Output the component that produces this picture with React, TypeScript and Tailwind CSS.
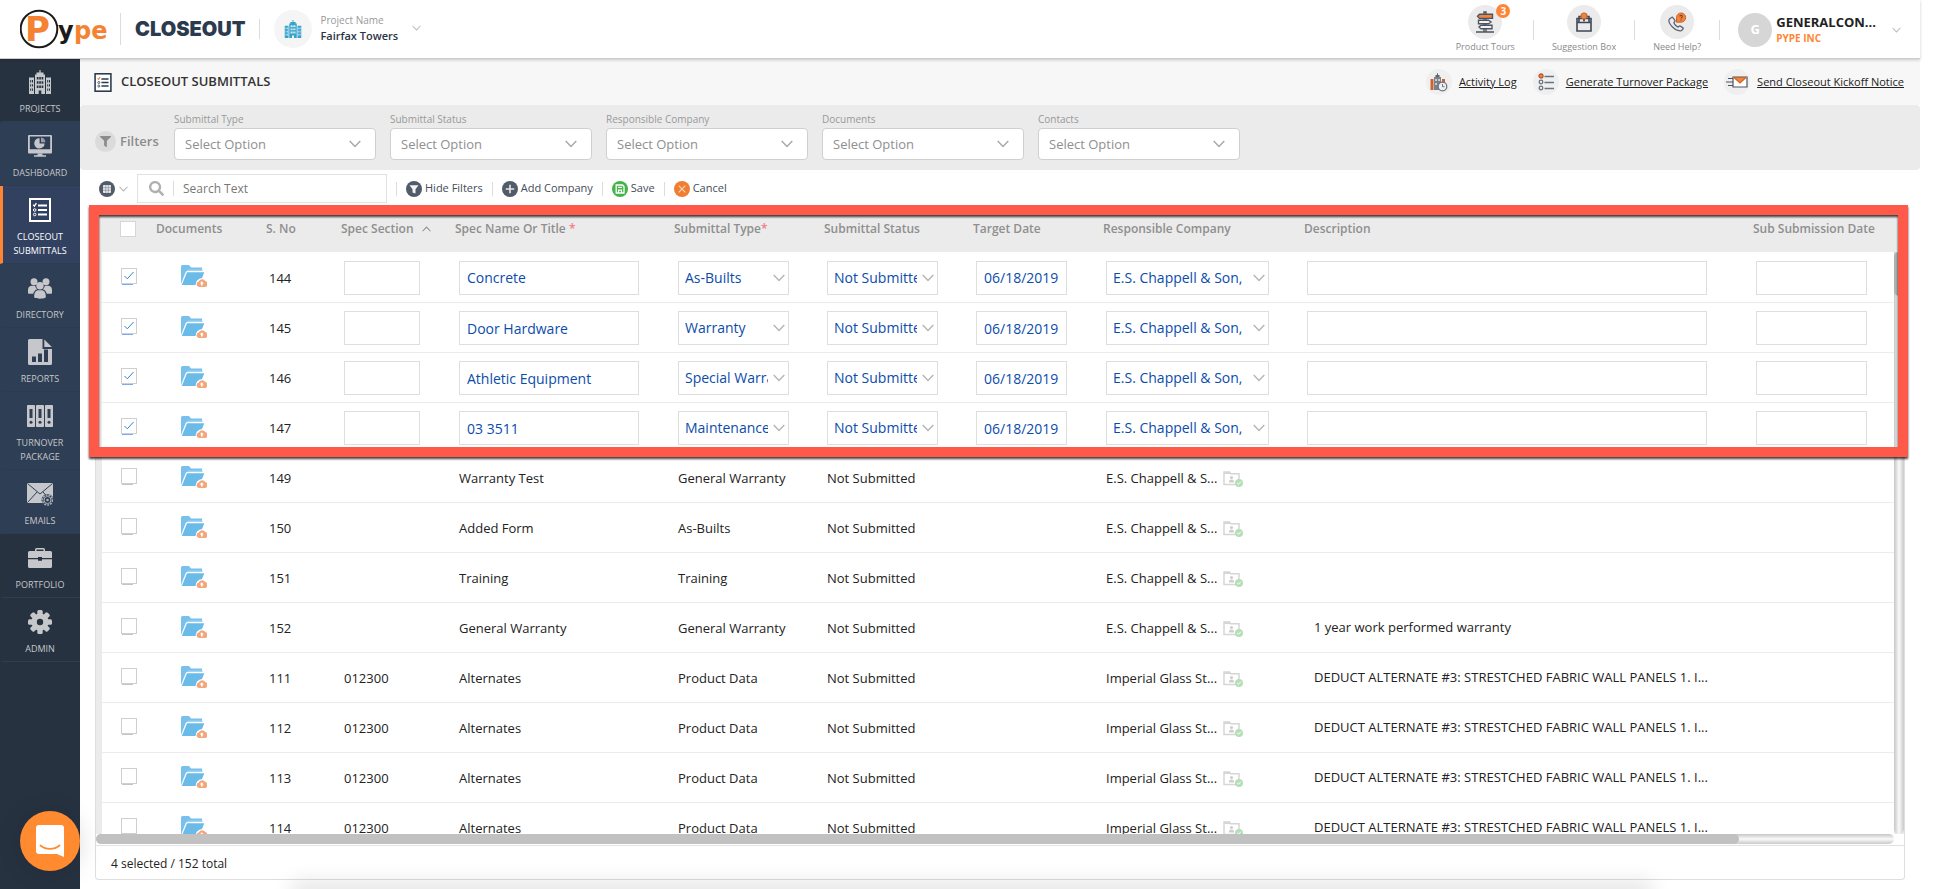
import { useState, type ReactNode } from "react";
import clsx from "clsx";
import { FaFilter, FaSearch } from "react-icons/fa";

type Submittal = {
  no: number;
  section?: string;
  name: string;
  type: string;
  company: string;
  description?: string;
  editing?: boolean;
};

const wallPanels = "DEDUCT ALTERNATE #3: STRESTCHED FABRIC WALL PANELS 1. I...";

const submittals: Submittal[] = [
  { no: 144, name: "Concrete", type: "As-Builts", company: "E.S. Chappell & Son,", editing: true },
  { no: 145, name: "Door Hardware", type: "Warranty", company: "E.S. Chappell & Son,", editing: true },
  { no: 146, name: "Athletic Equipment", type: "Special Warranty", company: "E.S. Chappell & Son,", editing: true },
  { no: 147, name: "03 3511", type: "Maintenance", company: "E.S. Chappell & Son,", editing: true },
  { no: 149, name: "Warranty Test", type: "General Warranty", company: "E.S. Chappell & S..." },
  { no: 150, name: "Added Form", type: "As-Builts", company: "E.S. Chappell & S..." },
  { no: 151, name: "Training", type: "Training", company: "E.S. Chappell & S..." },
  { no: 152, name: "General Warranty", type: "General Warranty", company: "E.S. Chappell & S...", description: "1 year work performed warranty" },
  { no: 111, section: "012300", name: "Alternates", type: "Product Data", company: "Imperial Glass St...", description: wallPanels },
  { no: 112, section: "012300", name: "Alternates", type: "Product Data", company: "Imperial Glass St...", description: wallPanels },
  { no: 113, section: "012300", name: "Alternates", type: "Product Data", company: "Imperial Glass St...", description: wallPanels },
  { no: 114, section: "012300", name: "Alternates", type: "Product Data", company: "Imperial Glass St...", description: wallPanels },
];

/* ---------- icons ---------- */

const Chevron = ({ className, up }: { className?: string; up?: boolean }) => (
  <svg viewBox="0 0 12 8" className={className} fill="none" stroke="currentColor" strokeWidth="1.4" aria-hidden="true">
    <path d={up ? "M.7 7 6 1.500 11.300 7" : "M.7 1 6 6.500 11.300 1"} />
  </svg>
);

const BuildingIcon = ({ className, hole }: { className?: string; hole: string }) => (
  <svg viewBox="0 0 24 24" className={className} fill="currentColor" aria-hidden="true">
    <path d="M11.4 0h1.2v2.5h2.9v2H17V24h-3.7v-3.5h-2.6V24H7V4.5h1.5v-2h2.9zM1 7.5h5V24H1zM18 7.5h5V24h-5z" />
    <g fill={hole}>
      <path d="M8.8 7h1.7v2.5H8.8zM11.2 7h1.7v2.5h-1.7zM13.6 7h1.7v2.5h-1.7zM8.8 11.2h1.7v2.5H8.8zM11.2 11.2h1.7v2.5h-1.7zM13.6 11.2h1.7v2.5h-1.7zM8.8 15.4h1.7v2.5H8.8zM11.2 15.4h1.7v2.5h-1.7zM13.6 15.4h1.7v2.5h-1.7z" />
      <path d="M2.2 10h1v2.4h-1zM4 10h1v2.4H4zM2.2 14.2h1v2.4h-1zM4 14.2h1v2.4H4zM2.2 18.4h1v2.4h-1zM4 18.4h1v2.4H4zM19.2 10h1v2.4h-1zM21 10h1v2.4h-1zM19.2 14.2h1v2.4h-1zM21 14.2h1v2.4h-1zM19.2 18.4h1v2.4h-1zM21 18.4h1v2.4h-1z" />
    </g>
  </svg>
);

const DashboardIcon = () => (
  <svg viewBox="0 0 24 24" className="size-6" fill="currentColor" aria-hidden="true">
    <path fillRule="evenodd" d="M1 1h22a1 1 0 0 1 1 1v16.5a1 1 0 0 1-1 1H1a1 1 0 0 1-1-1V2a1 1 0 0 1 1-1zm.8 1.6v12.6h20.4V2.6z" />
    <path d="M11.6 4.2v5.2h5a5.2 5.2 0 1 1-5-5.2z" />
    <path d="M13 3.6a5 5 0 0 1 4.4 4.6H13z" opacity=".7" />
    <path d="M9.5 19.5h5v1.8h-5zM6 21.2h12v1.6H6z" />
  </svg>
);

const ListIcon = ({ className, accent }: { className?: string; accent: string }) => (
  <svg viewBox="0 0 22 24" className={className} fill="none" stroke="currentColor" aria-hidden="true">
    <rect x="1" y="1" width="20" height="22" strokeWidth="2" />
    <path d="M9 7.500h9M9 12h9M9 16.500h9" strokeWidth="2" />
    <path d="M4.200 6.800l1.200 1.300 2-3" stroke={accent} strokeWidth="1.400" />
    <circle cx="5.700" cy="12" r="1.300" strokeWidth="1" />
    <circle cx="5.700" cy="16.500" r="1.300" strokeWidth="1" />
  </svg>
);

const PeopleIcon = () => (
  <svg viewBox="0 0 24 21" className="h-[21px] w-6" fill="currentColor" aria-hidden="true">
    <circle cx="6" cy="3.700" r="3.500" />
    <circle cx="18" cy="3.700" r="3.500" />
    <path d="M0 15.500V12c0-2.800 1.800-4.200 4-4.200h3.200c.3 1.700 1 2.700 1.900 3.400-2.300 1-3.400 2.500-3.900 4.600-2.200.1-3.900.1-5.200-.3zM24 15.500V12c0-2.800-1.800-4.200-4-4.200h-3.200c-.3 1.700-1 2.700-1.900 3.400 2.300 1 3.400 2.500 3.900 4.600 2.200.1 3.900.1 5.200-.3z" />
    <circle cx="12" cy="7.800" r="3.700" />
    <path d="M6.200 19.500c-.2-4.500 1.300-7.200 4.300-7.200h3c3 0 4.500 2.700 4.300 7.200-3 1.600-8.600 1.600-11.600 0z" />
  </svg>
);

const ReportIcon = () => (
  <svg viewBox="0 0 24 26" className="h-[26px] w-6" fill="currentColor" aria-hidden="true">
    <path fillRule="evenodd" d="M1.5 0h13v10H24v14.5a1.5 1.5 0 0 1-1.5 1.5h-21A1.5 1.5 0 0 1 0 24.500v-23A1.500 1.500 0 0 1 1.500 0zM4 17.500v5.500h4v-5.500zm6-3v8.500h4v-8.500zm6-4v12.500h4v-12.500z" />
    <path d="M16.300 .5 23.800 8h-7.500z" />
  </svg>
);

const BindersIcon = () => (
  <svg viewBox="0 0 26 22" className="h-[22px] w-[26px]" fill="currentColor" aria-hidden="true">
    {[0, 9, 18].map((x) => (
      <g key={x}>
        <rect x={x} width="8" height="22" rx=".8" />
        <rect x={x + 2.5} y="4" width="3" height="9" fill="#2e3e54" />
        <circle cx={x + 4} cy="17.300" r="1.500" fill="#2e3e54" />
      </g>
    ))}
  </svg>
);

const EmailsIcon = () => (
  <svg viewBox="0 0 26 24" className="h-6 w-[26px]" aria-hidden="true">
    <rect y="1" width="26" height="20" rx="1" fill="#c6c7ca" />
    <path d="M.5 1.500 13 12 25.500 1.500M.5 20.500 10 10M25.500 20.500 16 10" fill="none" stroke="#2e3e54" strokeWidth="1" />
    <circle cx="20.500" cy="18" r="6" fill="#2e3e54" />
    <circle cx="20.500" cy="18" r="5" fill="none" stroke="#a9adb5" strokeWidth="1.600" strokeDasharray="2 1" />
    <circle cx="20.500" cy="18" r="3.500" fill="none" stroke="#a9adb5" strokeWidth="1" />
    <circle cx="20.500" cy="18" r="1.300" fill="#a9adb5" />
  </svg>
);

const BriefcaseIcon = () => (
  <svg viewBox="0 0 24 20" className="h-5 w-6" fill="currentColor" aria-hidden="true">
    <path d="M7 3V1.500A1.500 1.500 0 0 1 8.500 0h7A1.500 1.500 0 0 1 17 1.500V3h5.500A1.500 1.500 0 0 1 24 4.500V10H14V9h-4v1H0V4.500A1.500 1.500 0 0 1 1.500 3zm1.500 0h7V1.500h-7z" />
    <path d="M0 11.200h10v1.500h4v-1.500h10v7.300a1.500 1.500 0 0 1-1.500 1.500h-21A1.500 1.500 0 0 1 0 18.500z" />
  </svg>
);

const GearIcon = () => (
  <svg viewBox="0 0 24 24" className="size-6" fill="currentColor" aria-hidden="true">
    {[0, 45, 90, 135].map((angle) => (
      <rect key={angle} x="9.300" y="0" width="5.400" height="24" rx="1.500" transform={`rotate(${angle} 12 12)`} />
    ))}
    <circle cx="12" cy="12" r="8.600" />
    <circle cx="12" cy="12" r="3.200" fill="#273241" />
  </svg>
);

const FolderUploadIcon = () => (
  <svg viewBox="0 0 26 23" className="h-[23px] w-[26px]" aria-hidden="true">
    <path d="M0 1.500A1.500 1.500 0 0 1 1.500 0H8l2 2.500h11V6H6.500a2 2 0 0 0-1.900 1.300L0 19z" fill="#79c1ec" />
    <path d="M6.500 5.200H22" stroke="#b5dcf4" strokeWidth="1" />
    <path d="M6 7.200h17.300L21 13a7 7 0 0 0-6.500 7H.8z" fill="#6bbbe9" />
    <path d="M18 22a2.800 2.800 0 0 1-.3-5.500 3.700 3.700 0 0 1 6.600-.4A3 3 0 0 1 23.800 22z" fill="#f2a67c" />
    <path d="M20.800 16.200l2 2.400h-1.200v1.900H20v-1.900h-1.200z" fill="#fff" />
  </svg>
);

const CompanyFolderIcon = () => (
  <svg viewBox="0 0 20 16" className="h-4 w-5" aria-hidden="true">
    <path d="M1 13.500V1h5.500l1.200 1.800H16v10.700z" fill="#fff" stroke="#d6d6d6" strokeWidth="1.500" />
    <path d="M1 1h5.500l1 2H1z" fill="#d6d6d6" />
    <circle cx="8.500" cy="6.500" r="1.600" fill="#cfcfcf" />
    <path d="M5.800 11.500c0-2 1-3 2.700-3s2.700 1 2.700 3z" fill="#cfcfcf" />
    <circle cx="16" cy="12" r="4" fill="#b4dfb7" />
    <path d="M14.200 12l1.300 1.300 2.300-2.500" fill="none" stroke="#fff" strokeWidth="1" />
  </svg>
);

const SignpostIcon = () => (
  <svg viewBox="0 0 20 22" className="h-[22px] w-5" fill="none" stroke="#4d5563" strokeWidth="1.400" aria-hidden="true">
    <path d="M9 1h2v20H9zM1 21h18" fill="#f0f0f0" />
    <path d="M4.500 3.200h13v4.200h-13L2.500 5.300z" fill="#f4823a" />
    <path d="M3.500 9.200h10l2.500 1.800-2.500 1.800h-10z" fill="#f0f0f0" />
    <path d="M6 14.200h11v3.600H6L4 16z" fill="#f0f0f0" />
  </svg>
);

const SuggestionIcon = () => (
  <svg viewBox="0 0 18 20" className="h-5 w-[18px]" fill="none" stroke="#3f4856" strokeWidth="1.600" aria-hidden="true">
    <path d="M4 10V4.500h10V10M2 6.500h14v12.500H2zM2 10.500h14" />
    <circle cx="9" cy="4" r="3" fill="#f4823a" stroke="#c8682c" strokeWidth="1.200" />
    <path d="M9 7v2.500" />
  </svg>
);

const HelpIcon = () => (
  <svg viewBox="0 0 20 20" className="size-5" fill="none" stroke="#5d6470" strokeWidth="1.300" aria-hidden="true">
    <path d="M4.500 5.500 2.500 7c-1 1.500-.5 4.500 3 8s7.500 4.500 9 3.500l1.500-1.500c.4-.6.200-1-.3-1.400l-2.400-1.500c-.5-.3-1-.2-1.300.200l-.8.800c-1.700-.5-4-3-4.300-4.500l.8-1c.4-.4.400-.8.200-1.200L5.900 5.700c-.3-.5-.9-.600-1.400-.200z" />
    <path d="M9.500 10.200V5.500a4.600 4.600 0 1 1 4.600 4.700z" fill="#f4823a" stroke="#c8682c" strokeWidth="1" />
    <path d="M12.700 4.400c.2-1.600 3-1.300 2.600.3-.2.600-1.200.8-1.200 1.800M14.100 7.600v1" stroke="#7a4420" strokeWidth="1.100" />
  </svg>
);

const ActivityIcon = () => (
  <svg viewBox="0 0 18 19" className="h-[19px] w-[18px]" aria-hidden="true">
    <path d="M.5 6h3v11h-3zM12 6h3v5h-3z" fill="#c9662f" />
    <path d="M4 4h7v13H4z" fill="#7b818c" />
    <path d="M5.500 2h4v2h-4zM7 .3h1V2H7z" fill="#5d6470" />
    <path d="M5.300 6h1.500v2H5.300zM8.300 6h1.500v2H8.300zM5.300 10h1.500v2H5.300z" fill="#e4e4e4" />
    <circle cx="12.500" cy="13.500" r="4.300" fill="#f0f0f0" stroke="#6b7280" strokeWidth="1.200" />
    <path d="M12.500 11v2.700h2" fill="none" stroke="#6b7280" />
  </svg>
);

const ChecklistIcon = () => (
  <svg viewBox="0 0 16 18" className="h-[18px] w-4" fill="none" stroke="#6b7280" strokeWidth="1.300" aria-hidden="true">
    <circle cx="3" cy="3" r="2" fill="#f4823a" stroke="#b6592a" />
    <circle cx="3" cy="9" r="1.800" />
    <circle cx="3" cy="15" r="1.800" />
    <path d="M6.500 3.500H16M6.500 9.500H16M6.500 15.500H16" />
  </svg>
);

const SendMailIcon = () => (
  <svg viewBox="0 0 22 12" className="h-3 w-[22px]" fill="none" stroke="#4d5563" strokeWidth="1.200" aria-hidden="true">
    <path d="M7 1h14v10H7z" fill="#fff" />
    <path d="M8 1.500h12L14 7z" fill="#f4823a" stroke="#c8682c" />
    <path d="M2 2.500h5M0 6h7M2 9.500h5" />
  </svg>
);

const SaveIcon = () => (
  <svg viewBox="0 0 16 16" className="size-4" aria-hidden="true">
    <circle cx="8" cy="8" r="8" fill="#45b34a" />
    <path d="M4.200 4h6.300L12 5.500V12H4.200z" fill="none" stroke="#fff" strokeWidth="1.300" />
    <path d="M6 6.300h4M6.500 12V9.200h3V12" fill="none" stroke="#fff" strokeWidth="1.200" />
  </svg>
);

const CancelIcon = () => (
  <svg viewBox="0 0 16 16" className="size-4" aria-hidden="true">
    <circle cx="8" cy="8" r="8" fill="#ef7e31" />
    <path d="M4.700 4.700l6.600 6.600M11.300 4.700l-6.600 6.600" stroke="#fbd5b8" strokeWidth="1.200" />
  </svg>
);

const AddIcon = () => (
  <svg viewBox="0 0 16 16" className="size-4" aria-hidden="true">
    <circle cx="8" cy="8" r="8" fill="#515b69" />
    <path d="M8 3.800v8.400M3.800 8h8.400" stroke="#e8e8ea" strokeWidth="1.600" />
  </svg>
);

const GridIcon = () => (
  <svg viewBox="0 0 16 16" className="size-4" aria-hidden="true">
    <circle cx="8" cy="8" r="8" fill="#515b69" />
    <rect x="4" y="4" width="8" height="8" rx="1" fill="#e8e8ea" />
    <path d="M6.700 4v8M9.300 4v8M4 6.700h8M4 9.300h8" stroke="#8a919b" strokeWidth=".7" />
  </svg>
);

const HideFiltersIcon = () => (
  <svg viewBox="0 0 16 16" className="size-4" aria-hidden="true">
    <circle cx="8" cy="8" r="8" fill="#515b69" />
    <path d="M3.500 4.200h9L9.500 8.200v4.400l-3-1.200V8.200z" fill="#f4f4f5" />
  </svg>
);

/* ---------- shared pieces ---------- */

const Divider = ({ className }: { className?: string }) => (
  <span className={clsx("w-px shrink-0 bg-[#dcdcdc]", className)} />
);

const HeaderAction = ({ icon, label, badge }: { icon: ReactNode; label: string; badge?: number }) => (
  <button type="button" className="flex flex-col items-center text-[9px] leading-4 text-[#8a8a8a]">
    <span className="relative flex size-[34px] items-center justify-center rounded-full bg-[#ebebeb]">
      {icon}
      {badge && (
        <span className="absolute -top-px -right-2 flex size-[14px] items-center justify-center rounded-full bg-[#ff8534] text-[10px] leading-none font-bold text-white">
          {badge}
        </span>
      )}
    </span>
    {label}
  </button>
);

const TitleLink = ({ icon, label }: { icon: ReactNode; label: string }) => (
  <a href="#" className="flex items-center gap-[7px] text-[11px] text-[#222] underline">
    <span className="flex size-[26px] items-center justify-center rounded-full bg-[#efefef]">{icon}</span>
    {label}
  </a>
);

const NavItem = ({ icon, label, tone = "blue", active }: { icon: ReactNode; label: string; tone?: "blue" | "dark"; active?: boolean }) => (
  <a
    href="#"
    className={clsx(
      "flex w-full flex-col items-center gap-2 border-b border-l-[3px] pt-3 pr-[3px] pb-[5px] text-center text-[9px] leading-[14px] font-medium uppercase",
      tone === "dark" && "border-b-[#313d4f] border-l-[#273241] bg-[#273241]",
      tone === "blue" && !active && "border-b-[#2c3b51] border-l-[#2e3e54] bg-[#2e3e54]",
      active ? "border-b-[#2c3b51] border-l-[#ff8534] bg-[#324160] text-white" : "text-[#c6c7ca]"
    )}
  >
    <span className="flex h-6 items-center justify-center">{icon}</span>
    <span className="w-16">{label}</span>
  </a>
);

const FilterSelect = ({ label }: { label: string }) => (
  <label className="flex max-w-[202px] min-w-0 flex-1 flex-col text-[10px] leading-4 text-[#999]">
    {label}
    <span className="relative mt-px">
      <select className="h-8 w-full appearance-none rounded border border-[#cfcfcf] bg-white pl-[10px] text-[13px] text-[#8f8f8f]">
        <option>Select Option</option>
      </select>
      <Chevron className="pointer-events-none absolute top-3 right-[15px] h-2 w-3 text-[#a6a6a6]" />
    </span>
  </label>
);

const ToolButton = ({ icon, label }: { icon: ReactNode; label: string }) => (
  <>
    <Divider className="h-[14px]" />
    <button type="button" className="flex items-center gap-[3px] text-[11px] text-[#444c58]">
      {icon}
      {label}
    </button>
  </>
);

const CellSelect = ({ value, label, className }: { value: string; label: string; className: string }) => (
  <span className={clsx("relative block", className)}>
    <select
      aria-label={label}
      defaultValue={value}
      className="block h-[34px] w-full appearance-none border border-[#dedede] bg-white pr-5 pl-[6px] text-sm text-[#0b4cab]"
    >
      <option>{value}</option>
    </select>
    <Chevron className="pointer-events-none absolute top-[13px] right-1 h-2 w-3 text-[#b5b5b5]" />
  </span>
);

const CellInput = ({ value = "", label, className }: { value?: string; label: string; className: string }) => (
  <input
    aria-label={label}
    defaultValue={value}
    className={clsx("block h-[34px] border border-[#dedede] bg-white px-[7px] text-sm text-[#0b4cab]", className)}
  />
);

const RowCheckbox = ({ checked, onChange, label }: { checked: boolean; onChange: () => void; label: string }) => (
  <span className="relative block size-4">
    <input
      type="checkbox"
      aria-label={label}
      checked={checked}
      onChange={onChange}
      className="block size-4 appearance-none border border-[#cfcfcf] bg-white"
    />
    {checked && (
      <svg viewBox="0 0 16 16" className="pointer-events-none absolute inset-0 size-4" aria-hidden="true">
        <path d="M3.500 8l2.800 2.800L12.500 4" fill="none" stroke="#2f86d0" strokeWidth="1" />
      </svg>
    )}
    <span className={clsx("absolute top-4 left-px h-px w-[11px]", checked ? "bg-[#74aef0]" : "bg-[#c4c4c4]")} />
  </span>
);

function SubmittalRow({ row, checked, onToggle }: { row: Submittal; checked: boolean; onToggle: () => void }) {
  return (
    <tr className="h-[50px] border-b border-[#ececec] bg-white">
      <td className="pb-[2px] pl-[19px]">
        <RowCheckbox checked={checked} onChange={onToggle} label={`Select submittal ${row.no}`} />
      </td>
      <td className="pl-[25px]">
        <FolderUploadIcon />
      </td>
      <td className="pt-1 pl-[3px]">{row.no}</td>
      {row.editing ? (
        <>
          <td className="pt-[2px] pl-[3px]"><CellInput label="Spec section" className="w-[76px]" /></td>
          <td className="pt-[2px] pl-1"><CellInput label="Spec name" value={row.name} className="w-[180px]" /></td>
          <td className="pt-[2px] pl-1"><CellSelect label="Submittal type" value={row.type} className="w-[111px]" /></td>
          <td className="pt-[2px] pl-[3px]"><CellSelect label="Submittal status" value="Not Submitted" className="w-[111px]" /></td>
          <td className="pt-[2px] pl-[3px]"><CellInput label="Target date" value="06/18/2019" className="w-[91px]" /></td>
          <td className="pt-[2px] pl-[3px]"><CellSelect label="Responsible company" value={row.company} className="w-[163px]" /></td>
          <td className="pt-[2px] pr-[46px] pl-[3px]"><CellInput label="Description" className="w-full" /></td>
          <td className="pt-[2px] pl-[3px]"><CellInput label="Sub submission date" className="w-[111px]" /></td>
        </>
      ) : (
        <>
          <td className="pt-1 pl-[3px]">{row.section}</td>
          <td className="pt-1 pl-1">{row.name}</td>
          <td className="pt-1 pl-1">{row.type}</td>
          <td className="pt-1 pl-[3px]">Not Submitted</td>
          <td />
          <td className="pt-1 pl-[3px]">
            <div className="flex items-center">
              <span className="w-[117px] whitespace-nowrap">{row.company}</span>
              <CompanyFolderIcon />
            </div>
          </td>
          <td className="truncate pt-[2px] pr-7 pl-[10px]">{row.description}</td>
          <td />
        </>
      )}
    </tr>
  );
}

export default function App() {
  const [selected, setSelected] = useState<number[]>([144, 145, 146, 147]);

  const toggle = (no: number) =>
    setSelected((prev) => (prev.includes(no) ? prev.filter((n) => n !== no) : [...prev, no]));

  return (
    <div className="flex h-screen flex-col overflow-hidden bg-white pr-6 font-['Open_Sans',sans-serif] text-[#222]">
      <header className="relative z-10 flex h-[59px] shrink-0 items-center border-b border-[#cdcdcd] bg-white pr-[19px] pl-5 shadow-[0_1px_3px_rgba(0,0,0,0.2)]">
        <svg viewBox="0 0 88 42" className="h-[42px] w-[88px]" role="img" aria-label="Pype">
          <circle cx="19" cy="21" r="18.300" fill="#fff" stroke="#1b1b1b" strokeWidth="2" />
          <g fontFamily="DejaVu Sans" fontWeight="700" fill="#f58232">
            <text x="5" y="33" fontSize="34">P</text>
            <text x="38" y="31" fontSize="24" fill="#1b1b1b">y</text>
            <text x="54" y="31" fontSize="24">pe</text>
          </g>
        </svg>
        <Divider className="ml-3 h-8" />
        <span className="ml-[14px] font-['Inter',sans-serif] text-xl leading-6 font-black text-[#2b3a4e]">CLOSEOUT</span>
        <Divider className="ml-[14px] h-5" />
        <span className="ml-[14px] flex size-[38px] items-center justify-center rounded-full bg-[#f5f5f5]">
          <BuildingIcon className="size-[18px] text-[#36a3cb]" hole="#e6f3f9" />
        </span>
        <button type="button" className="ml-2 flex items-center gap-[14px] pb-[3px] text-left">
          <span className="flex flex-col text-[11px] leading-[15px]">
            <span className="text-[10px] text-[#999]">Project Name</span>
            <span className="font-semibold text-[#2b3444]">Fairfax Towers</span>
          </span>
          <Chevron className="h-[6px] w-[9px] text-[#bdbdbd]" />
        </button>

        <div className="ml-auto flex items-center gap-[18px] pt-[2px]">
          <HeaderAction icon={<SignpostIcon />} label="Product Tours" badge={3} />
          <Divider className="h-5" />
          <HeaderAction icon={<SuggestionIcon />} label="Suggestion Box" />
          <Divider className="h-5" />
          <HeaderAction icon={<HelpIcon />} label="Need Help?" />
          <Divider className="h-5" />
          <button type="button" className="flex items-center text-left">
            <span className="flex size-[34px] items-center justify-center rounded-full bg-[#d6d6d6] text-[13px] font-bold text-white">G</span>
            <span className="ml-1 flex flex-col leading-4 font-bold">
              <span className="text-[13px]">GENERALCON...</span>
              <span className="text-[10px] text-[#ff8534]">PYPE INC</span>
            </span>
            <Chevron className="ml-4 h-[6px] w-[9px] text-[#bdbdbd]" />
          </button>
        </div>
      </header>

      <div className="flex min-h-0 flex-1">
        <nav className="-mt-px flex w-20 shrink-0 flex-col bg-[#273241]">
          <NavItem tone="dark" label="Projects" icon={<BuildingIcon className="size-6" hole="#273241" />} />
          <NavItem label="Dashboard" icon={<DashboardIcon />} />
          <NavItem active label="Closeout Submittals" icon={<ListIcon className="h-6 w-[22px]" accent="#fff" />} />
          <NavItem label="Directory" icon={<PeopleIcon />} />
          <NavItem label="Reports" icon={<ReportIcon />} />
          <NavItem label="Turnover Package" icon={<BindersIcon />} />
          <NavItem label="Emails" icon={<EmailsIcon />} />
          <NavItem tone="dark" label="Portfolio" icon={<BriefcaseIcon />} />
          <NavItem tone="dark" label="Admin" icon={<GearIcon />} />
        </nav>

        <main className="flex min-w-0 flex-1 flex-col">
          <div className="flex h-[46px] shrink-0 items-center bg-[#f7f7f7] pr-4 pl-[14px]">
            <ListIcon className="h-[19px] w-[18px] bg-white text-[#2b3a4e]" accent="#f4823a" />
            <h1 className="ml-[9px] text-[13px] font-semibold text-[#333]">CLOSEOUT SUBMITTALS</h1>
            <div className="ml-auto flex items-center gap-4">
              <TitleLink icon={<ActivityIcon />} label="Activity Log" />
              <TitleLink icon={<ChecklistIcon />} label="Generate Turnover Package" />
              <TitleLink icon={<SendMailIcon />} label="Send Closeout Kickoff Notice" />
            </div>
          </div>

          <section className="flex h-[65px] shrink-0 items-start gap-[14px] rounded bg-[#ebebeb] pt-[6px] pl-[15px]">
            <div className="flex w-[65px] items-center gap-1 pt-5 text-[13px] font-semibold text-[#8c8c8c]">
              <span className="flex size-[21px] items-center justify-center rounded-full bg-[#dbdbdb]">
                <FaFilter className="size-[11px]" />
              </span>
              Filters
            </div>
            <FilterSelect label="Submittal Type" />
            <FilterSelect label="Submittal Status" />
            <FilterSelect label="Responsible Company" />
            <FilterSelect label="Documents" />
            <FilterSelect label="Contacts" />
          </section>

          <section className="flex h-9 shrink-0 items-center gap-[9px] pt-px pl-[19px]">
            <button type="button" aria-label="Choose columns" className="flex items-center gap-1">
              <GridIcon />
              <Chevron className="h-[6px] w-[9px] text-[#b5b5b5]" />
            </button>
            <label className="flex h-[29px] w-[250px] items-center border border-[#e2e2e2] pl-[11px]">
              <FaSearch className="size-[15px] text-[#b0b0b0]" />
              <Divider className="mx-[9px] h-[15px]" />
              <input type="text" aria-label="Search" placeholder="Search Text" className="min-w-0 flex-1 text-[12px] outline-none placeholder:text-[#777]" />
            </label>
            <ToolButton icon={<HideFiltersIcon />} label="Hide Filters" />
            <ToolButton icon={<AddIcon />} label="Add Company" />
            <ToolButton icon={<SaveIcon />} label="Save" />
            <ToolButton icon={<CancelIcon />} label="Cancel" />
          </section>

          <section className="relative mr-[15px] mb-[9px] ml-[15px] flex min-h-0 flex-1 flex-col rounded-b border border-t-0 border-[#dedede]">
            <div className="flex min-h-0 flex-1">
              <div className="min-w-0 flex-1 overflow-hidden border-l-[6px] border-[#ebebeb]">
                <table className="w-full table-fixed border-collapse text-left text-[13px]">
                  <colgroup>
                    <col className="w-[54px]" />
                    <col className="w-[110px]" />
                    <col className="w-[75px]" />
                    <col className="w-[114px]" />
                    <col className="w-[219px]" />
                    <col className="w-[150px]" />
                    <col className="w-[149px]" />
                    <col className="w-[130px]" />
                    <col className="w-[201px]" />
                    <col />
                    <col className="w-[141px]" />
                  </colgroup>
                  <thead>
                    <tr className="h-[46px] bg-[#ebebeb] text-[12px] text-[#8f8f8f] [&>th]:font-semibold">
                      <th className="pl-[18px]">
                        <input type="checkbox" aria-label="Select all" className="block size-4 appearance-none border border-[#d6d6d6] bg-white" />
                      </th>
                      <th>Documents</th>
                      <th>S. No</th>
                      <th>
                        <span className="flex items-center gap-2">
                          Spec Section <Chevron up className="h-[6px] w-[9px]" />
                        </span>
                      </th>
                      <th>Spec Name Or Title <span className="text-[#f47c7c]">*</span></th>
                      <th>Submittal Type<span className="text-[#f47c7c]">*</span></th>
                      <th>Submittal Status</th>
                      <th>Target Date</th>
                      <th>Responsible Company</th>
                      <th>Description</th>
                      <th>Sub Submission Date</th>
                    </tr>
                  </thead>
                  <tbody>
                    {submittals.map((row) => (
                      <SubmittalRow key={row.no} row={row} checked={selected.includes(row.no)} onToggle={() => toggle(row.no)} />
                    ))}
                  </tbody>
                </table>
              </div>
              <div className="w-[10px] bg-[#ebebeb] pt-[46px]">
                <div className="h-full rounded-b-full bg-linear-to-r from-[#c6c6c6] via-[#fafafa] to-[#c9c9c9]">
                  <div className="h-11 rounded-full bg-[#b0b0b0]" />
                </div>
              </div>
            </div>

            <div className="mr-[10px] h-[11px] shrink-0 pb-px">
              <div className="h-full rounded-full bg-linear-to-b from-[#c6c6c6] via-[#fafafa] to-[#c9c9c9]">
                <div className="h-full w-[calc(100%-155px)] rounded-full bg-[#c1c1c1]" />
              </div>
            </div>
            <footer className="flex h-[34px] shrink-0 items-center border-t border-[#e2e2e2] pt-[2px] pl-[15px] text-[12px]">
              {selected.length} selected / 152 total
            </footer>

            {/* callout around the rows being edited */}
            <div className="pointer-events-none absolute -top-px -right-1 -left-[7px] h-[252px] border-[10px] border-[#ff594a] drop-shadow-[0_2px_1px_rgba(0,0,0,0.75)]" />
          </section>
        </main>
      </div>

      <div className="pointer-events-none fixed right-[300px] -bottom-2 left-[300px] h-2 shadow-[0_0_20px_8px_rgba(0,0,0,0.1)]" />

      <button
        type="button"
        aria-label="Open chat"
        className="fixed bottom-[18px] left-5 z-20 flex size-[60px] items-center justify-center rounded-full bg-[#ff8a2f] shadow-[0_2px_24px_rgba(0,0,0,0.15)]"
      >
        <svg viewBox="0 0 28 32" className="h-8 w-7" aria-hidden="true">
          <path d="M3 0h22a3 3 0 0 1 3 3v29l-7-3H3a3 3 0 0 1-3-3V3a3 3 0 0 1 3-3z" fill="#fff" />
          <path d="M4.500 20.500c5.500 4.500 13.500 4.500 19 0" fill="none" stroke="#ff8a2f" strokeWidth="1.800" strokeLinecap="round" />
        </svg>
      </button>
    </div>
  );
}
